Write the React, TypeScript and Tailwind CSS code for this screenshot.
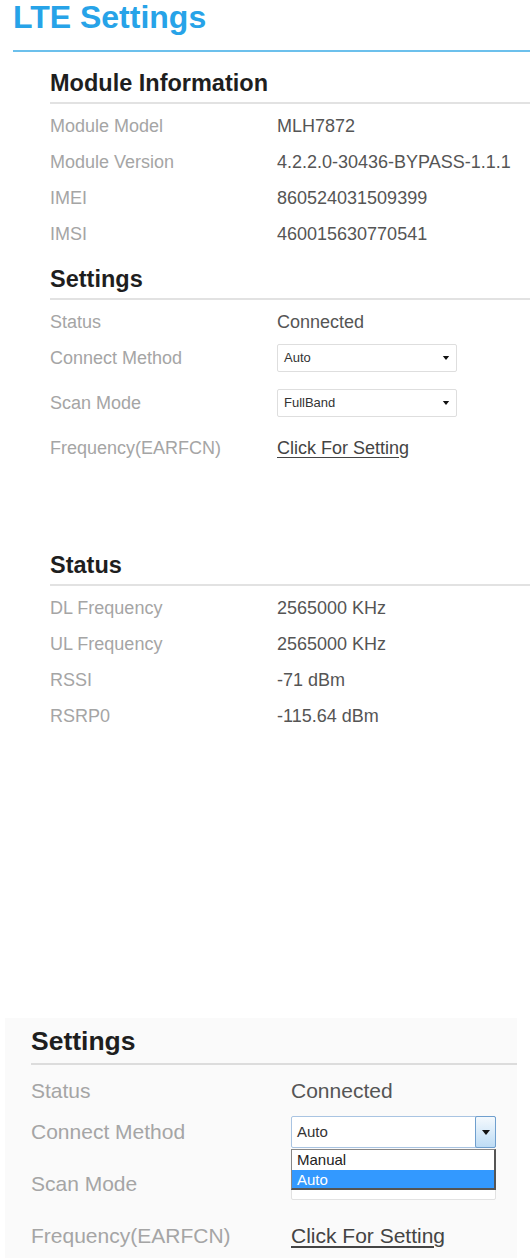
import type { ReactNode } from "react";

type Row = { label: string; value: ReactNode; gap?: boolean };

function Caret({ className }: { className?: string }) {
  return (
    <svg viewBox="0 0 8 5" className={className} aria-hidden="true">
      <path d="M0 0h8L4 5z" fill="#111" />
    </svg>
  );
}

function SelectBox({ value }: { value: string }) {
  return (
    <div className="flex h-[28px] w-[180px] items-center justify-between rounded-[2px] border border-[#dedede] bg-white pl-[6px] pr-[6px] text-[13px] text-[#333]">
      <span>{value}</span>
      <Caret className="h-[4px] w-[8px]" />
    </div>
  );
}

function Section({ title, rows }: { title: string; rows: Row[] }) {
  return (
    <div>
      <h2 className="h-[28px] text-[23.5px] leading-[28px] font-bold text-[#1e1e1e]">{title}</h2>
      <div className="mt-[5px] h-[2px] bg-[#e2e2e2]" />
      <div className="mt-[4px]">
        {rows.map((row) => (
          <div key={row.label} className={`flex h-[36px] items-center text-[18px] ${row.gap ? "mt-[9px]" : ""}`}>
            <div className="w-[227px] shrink-0 text-[#a5a5a5]">{row.label}</div>
            <div className="text-[#555]">{row.value}</div>
          </div>
        ))}
      </div>
    </div>
  );
}

function OpenSelect() {
  return (
    <div className="relative h-[32px] w-[205px]">
      <div className="flex h-full items-center rounded-[2px] border border-[#a9c4e2] bg-white pl-[5px] text-[15px] text-[#333]">
        Auto
      </div>
      <div className="absolute top-0 right-0 flex h-[32px] w-[21px] items-center justify-center rounded-[2px] border border-[#6f9fce] bg-gradient-to-b from-[#f4f9fd] to-[#bddcf5]">
        <Caret className="h-[5px] w-[8px]" />
      </div>
      <div className="absolute top-[33px] left-0 z-10 w-[205px] border border-[#555] border-t-[#888] border-l-[#888] border-r-2 border-b-2 bg-white text-[15px] leading-[19px]">
        <div className="h-[20px] pl-[5px] text-[#222]">Manual</div>
        <div className="h-[18px] bg-[#3399ff] pl-[5px] text-white">Auto</div>
      </div>
    </div>
  );
}

export default function App() {
  const moduleRows: Row[] = [
    { label: "Module Model", value: "MLH7872" },
    { label: "Module Version", value: "4.2.2.0-30436-BYPASS-1.1.1" },
    { label: "IMEI", value: "860524031509399" },
    { label: "IMSI", value: "460015630770541" },
  ];

  const settingsRows: Row[] = [
    { label: "Status", value: "Connected" },
    { label: "Connect Method", value: <SelectBox value="Auto" /> },
    { label: "Scan Mode", value: <SelectBox value="FullBand" />, gap: true },
    {
      label: "Frequency(EARFCN)",
      value: <span className="text-[#444] underline underline-offset-[3px]">Click For Setting</span>,
      gap: true,
    },
  ];

  const statusRows: Row[] = [
    { label: "DL Frequency", value: "2565000 KHz" },
    { label: "UL Frequency", value: "2565000 KHz" },
    { label: "RSSI", value: "-71 dBm" },
    { label: "RSRP0", value: "-115.64 dBm" },
  ];

  return (
    <div className="h-[1258px] w-[530px] overflow-hidden bg-white font-['Liberation_Sans',Arial,sans-serif]">
      <div className="pl-[13px]">
        <h1 className="h-[34px] text-[32px] leading-[34px] font-bold text-[#27a3e8]">LTE Settings</h1>
        <div className="mt-[16px] h-[2px] bg-[#6cc0ec]" />
      </div>

      <div className="pl-[50px]">
        <div className="mt-[17px]">
          <Section title="Module Information" rows={moduleRows} />
        </div>
        <div className="mt-[13px]">
          <Section title="Settings" rows={settingsRows} />
        </div>
        <div className="mt-[85px]">
          <Section title="Status" rows={statusRows} />
        </div>
      </div>

      {/* second capture: the connect method list opened */}
      <div className="mt-[284px] ml-[5px] h-[240px] w-[512px] bg-[#fafafa] pt-[7px] pl-[26px]">
        <h2 className="h-[32px] text-[26.5px] leading-[32px] font-bold text-[#1e1e1e]">Settings</h2>
        <div className="mt-[6px] h-[2px] bg-[#dcdcdc]" />
        <div className="mt-[5px] text-[21px]">
          <div className="flex h-[41px] items-center">
            <div className="w-[260px] shrink-0 text-[#a5a5a5]">Status</div>
            <div className="text-[#555]">Connected</div>
          </div>
          <div className="flex h-[42px] items-center">
            <div className="w-[260px] shrink-0 text-[#a5a5a5]">Connect Method</div>
            <OpenSelect />
          </div>
          <div className="mt-[10px] flex h-[42px] items-center">
            <div className="w-[260px] shrink-0 text-[#a5a5a5]">Scan Mode</div>
            <div className="h-[32px] w-[205px] rounded-[2px] border border-[#e2e2e2] bg-white" />
          </div>
          <div className="mt-[10px] flex h-[42px] items-center">
            <div className="w-[260px] shrink-0 text-[#a5a5a5]">Frequency(EARFCN)</div>
            <span className="text-[#444] underline underline-offset-[3px]">Click For Setting</span>
          </div>
        </div>
      </div>
    </div>
  );
}
